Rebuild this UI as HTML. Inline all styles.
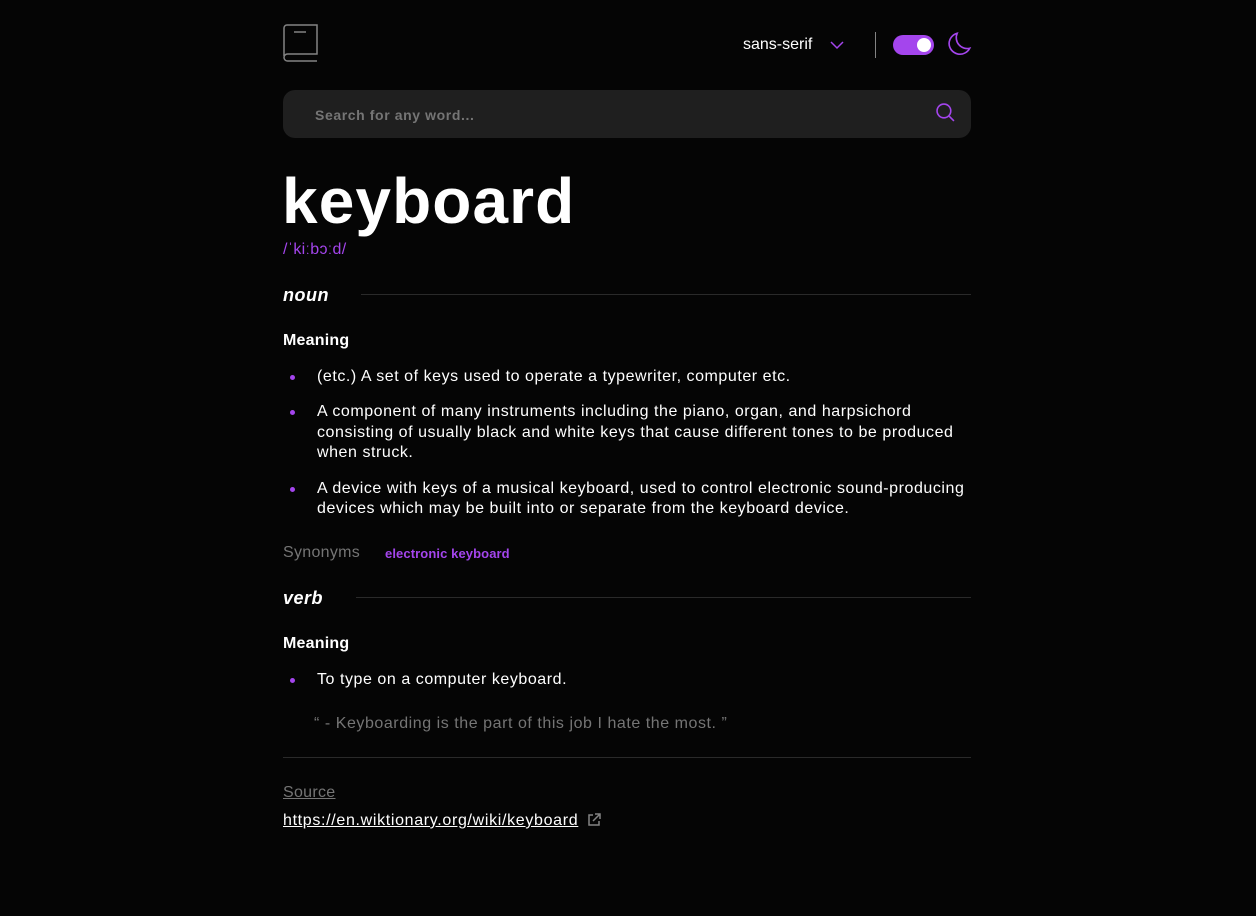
<!DOCTYPE html>
<html><head><meta charset="utf-8"><style>
*{margin:0;padding:0;box-sizing:border-box}
body{width:1256px;height:916px;background:#050505;font-family:"Liberation Sans",sans-serif;color:#fff;position:relative;overflow:hidden}
.a{position:absolute;white-space:nowrap}
.t{font-size:16px;line-height:20px;letter-spacing:0.55px}
.dot{position:absolute;width:5px;height:5px;border-radius:50%;background:#a445ed}
.line{position:absolute;height:1px;background:#2a2a2a}
</style></head><body>
<svg class="a" style="left:283px;top:24px" width="35" height="38" viewBox="0 0 35 38" fill="none" stroke="#838383" stroke-width="1.5"><path d="M1 32V4a3 3 0 0 1 3-3h30v29H4.5a3.5 3.5 0 0 0 0 7H34"/><path d="M11 8h12"/></svg>
<div class="a" style="left:743px;top:35px;font-size:16px;line-height:20px">sans-serif</div>
<svg class="a" style="left:830px;top:41px" width="14" height="9" viewBox="0 0 14 9" fill="none" stroke="#a445ed" stroke-width="1.5"><path d="M1 1l6 6 6-6"/></svg>
<div class="a" style="left:875px;top:32px;width:1px;height:26px;background:#838383"></div>
<div class="a" style="left:893px;top:35px;width:41px;height:20px;border-radius:10px;background:#a445ed"></div>
<div class="a" style="left:917px;top:38px;width:14px;height:14px;border-radius:50%;background:#fff"></div>
<svg class="a" style="left:948px;top:32px" width="24" height="24" viewBox="0 0 22 22" fill="none" stroke="#a445ed" stroke-width="1.5"><path d="M1 10.4a10 10 0 0 0 18.9 4.5A10 10 0 0 1 8.4 1.2 10 10 0 0 0 1 10.4z"/></svg>
<div class="a" style="left:283px;top:90px;width:688px;height:48px;border-radius:12px;background:#1f1f1f"></div>
<div class="a" style="left:315px;top:106px;font-size:14px;font-weight:bold;color:#757575;line-height:18px;letter-spacing:0.6px">Search for any word...</div>
<svg class="a" style="left:936px;top:103px" width="19" height="19" viewBox="0 0 18 18" fill="none" stroke="#a445ed" stroke-width="1.5"><circle cx="7.5" cy="7.5" r="6.5"/><path d="M12.5 12.5l4.5 4.5"/></svg>
<div class="a" style="left:282px;top:163px;font-size:64px;font-weight:bold;line-height:76px;letter-spacing:1.1px">keyboard</div>
<div class="a" style="left:283px;top:240px;font-size:16px;color:#a445ed;line-height:20px;letter-spacing:0.3px">/ˈkiːbɔːd/</div>
<div class="a" style="left:283px;top:284px;font-size:18px;font-weight:bold;font-style:italic;line-height:22px;letter-spacing:0.5px">noun</div>
<div class="line" style="left:361px;top:294px;width:610px"></div>
<div class="a" style="left:283px;top:331px;font-size:16px;font-weight:bold;line-height:20px;letter-spacing:0.2px">Meaning</div>
<div class="dot" style="left:290px;top:375px"></div>
<div class="a t" style="left:317px;top:367px">(etc.) A set of keys used to operate a typewriter, computer etc.</div>
<div class="dot" style="left:290px;top:410px"></div>
<div class="a t" style="left:317px;top:402px">A component of many instruments including the piano, organ, and harpsichord</div>
<div class="a t" style="left:317px;top:423px">consisting of usually black and white keys that cause different tones to be produced</div>
<div class="a t" style="left:317px;top:443px">when struck.</div>
<div class="dot" style="left:290px;top:487px"></div>
<div class="a t" style="left:317px;top:479px">A device with keys of a musical keyboard, used to control electronic sound-producing</div>
<div class="a t" style="left:317px;top:499px">devices which may be built into or separate from the keyboard device.</div>
<div class="a" style="left:283px;top:543px;color:#757575;font-size:16px;line-height:20px;letter-spacing:0.3px">Synonyms</div>
<div class="a" style="left:385px;top:546px;font-size:13px;font-weight:bold;color:#a445ed;line-height:16px;letter-spacing:0.1px">electronic keyboard</div>
<div class="a" style="left:283px;top:587px;font-size:18px;font-weight:bold;font-style:italic;line-height:22px;letter-spacing:0.5px">verb</div>
<div class="line" style="left:356px;top:597px;width:615px"></div>
<div class="a" style="left:283px;top:634px;font-size:16px;font-weight:bold;line-height:20px;letter-spacing:0.2px">Meaning</div>
<div class="dot" style="left:290px;top:678px"></div>
<div class="a t" style="left:317px;top:670px">To type on a computer keyboard.</div>
<div class="a t" style="left:314px;top:714px;color:#757575">“ - Keyboarding is the part of this job I hate the most. ”</div>
<div class="line" style="left:283px;top:757px;width:688px"></div>
<div class="a t" style="left:283px;top:783px;color:#757575;text-decoration:underline;letter-spacing:0.3px">Source</div>
<div class="a t" style="left:283px;top:811px;text-decoration:underline;letter-spacing:0.67px">https://en.wiktionary.org/wiki/keyboard</div>
<svg class="a" style="left:587px;top:813px" width="14" height="14" viewBox="0 0 14 14" fill="none" stroke="#838383" stroke-width="1.5"><path d="M6 2H2v10h10V8"/><path d="M8 1h5v5M13 1L6 8"/></svg>
</body></html>
